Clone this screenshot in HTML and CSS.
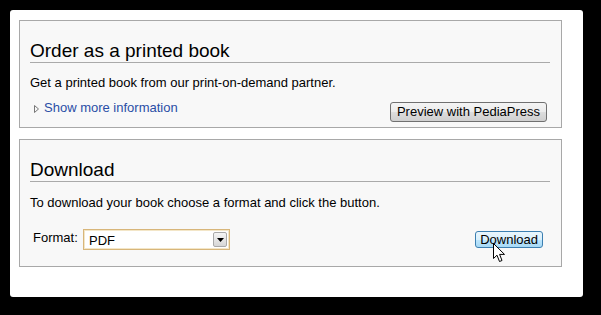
FILE: index.html
```html
<!DOCTYPE html>
<html lang="en">
<head>
    <meta charset="UTF-8">
    <title>Book export</title>
    <link rel="stylesheet" href="styles.css">
</head>
<body>
    <div class="window">
        <div class="box">
            <h2>Order as a printed book</h2>
            <p>Get a printed book from our print-on-demand partner.</p>
            <div class="row">
                <a class="more" href="#">
                    <svg class="tri" width="5" height="8" viewBox="0 0 5 8"><path d="M0.5 0.5 L4.5 4 L0.5 7.5 Z" fill="none" stroke="#777" stroke-width="1"/></svg>
                    Show more information
                </a>
                <button class="btn preview-btn">Preview with PediaPress</button>
            </div>
        </div>

        <div class="box">
            <h2>Download</h2>
            <p class="intro">To download your book choose a format and click the button.</p>
            <div class="row format-row">
                <label class="format-label">Format:</label>
                <div class="select">
                    <span class="select-value">PDF</span>
                    <span class="select-arrow">
                        <svg width="7" height="4" viewBox="0 0 7 4"><path d="M0 0 H7 L3.5 4 Z" fill="#000"/></svg>
                    </span>
                </div>
                <button class="btn btn-hover download-btn">Download</button>
                <!-- mouse pointer over the button -->
                <svg class="cursor" width="13" height="20" viewBox="0 0 13 20">
                    <path d="M0.5 0.5 L0.5 15.5 L4 12.2 L6.5 18.5 L9 17.5 L6.6 11.4 L11.5 11.4 Z" fill="#fff" stroke="#000" stroke-width="1" stroke-linejoin="round"/>
                </svg>
            </div>
        </div>
    </div>
</body>
</html>
```

FILE: styles.css
```css
body {
    margin: 0;
    background-color: #000;
    font-family: "Liberation Sans", Arial, sans-serif;
    color: #000;
}
.window {
    width: 573px;
    height: 287px;
    margin: 10px 0 0 10px;
    padding: 10px 0 0 9px;
    box-sizing: border-box;
    background: #fff;
    border-radius: 3px;
}
.box {
    width: 543px;
    box-sizing: border-box;
    background: #f8f8f8;
    border: 1px solid #a8a8a8;
    padding: 18px 11px 5px 10px;
    margin-bottom: 11px;
}
.box h2 {
    margin: 0;
    font-size: 19px;
    font-weight: normal;
    line-height: 23px;
    border-bottom: 1px solid #aaa;
}
.box p {
    margin: 12px 0 0 0;
    font-size: 13px;
    line-height: 15px;
}
.box p.intro {
    margin-top: 13px;
}
.row {
    display: flex;
    justify-content: space-between;
    align-items: flex-start;
    margin-top: 10px;
}
.more {
    display: flex;
    align-items: center;
    gap: 5px;
    padding-left: 4px;
    font-size: 13px;
    line-height: 15px;
    color: #2a4ea6;
    text-decoration: none;
}
.tri {
    margin-top: 2px;
}
.btn {
    font-family: "Liberation Sans", Arial, sans-serif;
    font-size: 13px;
    line-height: 15px;
    color: #000;
    padding: 1px 6px 2px;
    border: 1px solid #707070;
    border-radius: 3px;
    background: linear-gradient(#f4f4f4 0%, #ebebeb 50%, #dddddd 51%, #cfcfcf 100%);
}
.preview-btn {
    margin-top: 2px;
    margin-right: 3px;
    height: 20px;
}
.format-row {
    position: relative;
    margin-top: 19px;
    margin-bottom: 11px;
    align-items: center;
    justify-content: flex-start;
}
.format-label {
    font-size: 13px;
    line-height: 15px;
    margin-left: 3px;
    margin-top: -4px;
    width: 50px;
}
.select {
    display: flex;
    align-items: center;
    justify-content: space-between;
    width: 147px;
    height: 21px;
    box-sizing: border-box;
    background: #fff;
    border: 1px solid #d8b67a;
    box-shadow: inset 0 0 0 1px #f3e6c8;
    padding: 0 2px 0 5px;
}
.select-value {
    font-size: 13px;
    line-height: 15px;
    margin-top: 1px;
}
.select-arrow {
    display: flex;
    align-items: center;
    justify-content: center;
    width: 14px;
    height: 15px;
    box-sizing: border-box;
    border: 1px solid #a9a9a9;
    border-radius: 2px;
    background: linear-gradient(#f5f5f5, #d6d6d6);
}
.download-btn {
    margin-left: auto;
    margin-right: 7px;
    height: 17px;
    padding: 0 4px;
    line-height: 14px;
}
.btn-hover {
    border-color: #3c7fb1;
    background: linear-gradient(#eaf6fd 0%, #d9f0fc 50%, #bee6fd 51%, #a7d9f5 100%);
}
.cursor {
    position: absolute;
    left: 463px;
    top: 14px;
}
```
